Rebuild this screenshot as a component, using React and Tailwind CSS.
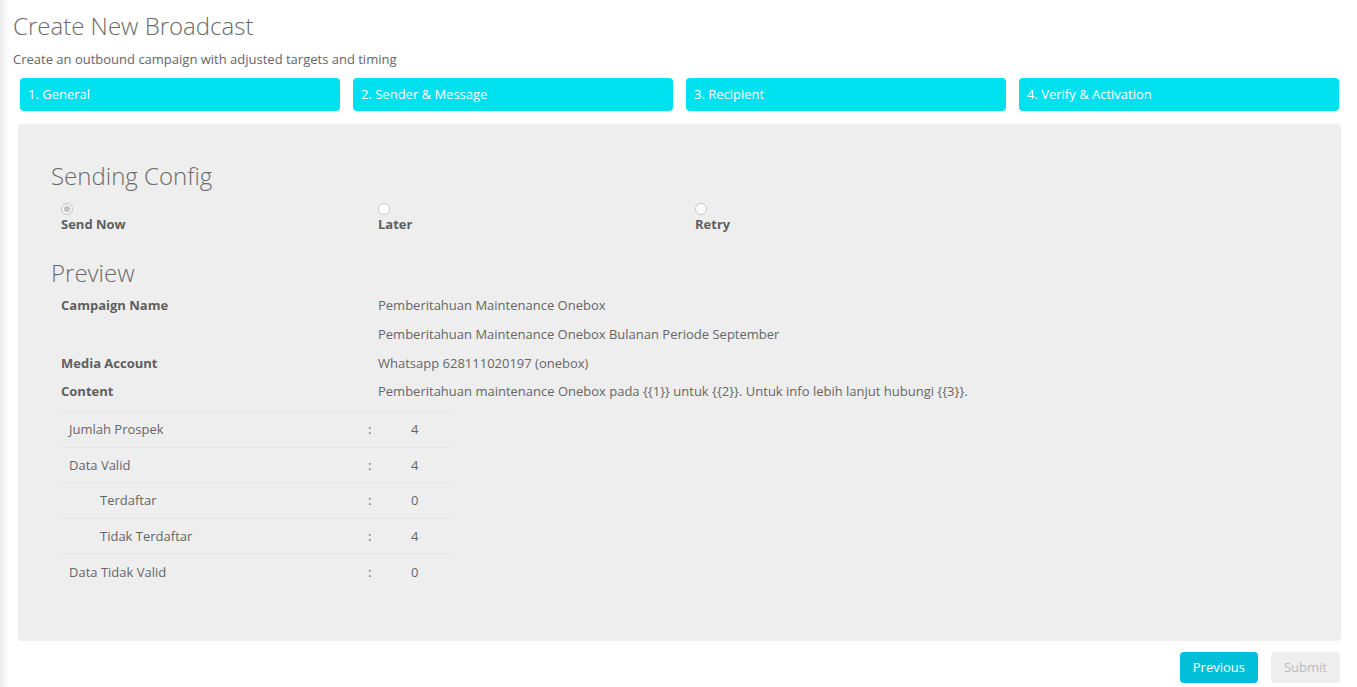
import React, { useState } from "react";

const steps = ["1. General", "2. Sender & Message", "3. Recipient", "4. Verify & Activation"];

const summary = [
  { label: "Jumlah Prospek", value: "4", indent: false },
  { label: "Data Valid", value: "4", indent: false },
  { label: "Terdaftar", value: "0", indent: true },
  { label: "Tidak Terdaftar", value: "4", indent: true },
  { label: "Data Tidak Valid", value: "0", indent: false },
];

function Radio({ checked }) {
  return (
    <span
      className={
        "block w-[12px] h-[12px] rounded-full border " +
        (checked ? "border-[#c4c4c4] bg-[#f4f4f4] flex items-center justify-center" : "border-[#c8c8c8] bg-white")
      }
    >
      {checked && <span className="block w-[6px] h-[6px] rounded-full bg-[#c2c2c2]" />}
    </span>
  );
}

export default function App() {
  const [mode, setMode] = useState("now");

  return (
    <div className="flex min-h-[687px] bg-white text-[#666]" style={{ fontFamily: '"Open Sans", sans-serif' }}>
      <div className="w-[10px] shrink-0 bg-gradient-to-r from-[#ededed] to-white" />
      <div className="flex-1 pr-[16px]">
        <h1 className="text-[24px] font-light leading-[32px] mt-[10px] ml-[3px] text-[#6b6b6b]">Create New Broadcast</h1>
        <p className="text-[13px] leading-[18px] mt-[8px] ml-[3px]">Create an outbound campaign with adjusted targets and timing</p>

        <div className="grid grid-cols-4 gap-[13px] mt-[10px] ml-[10px] mr-[2px]">
          {steps.map((s) => (
            <div key={s} className="h-[33px] rounded-[4px] bg-[#00e1f0] text-white text-[13px] flex items-center px-[8px]">
              {s}
            </div>
          ))}
        </div>

        <div className="mt-[13px] ml-[8px] h-[517px] rounded-[4px] bg-[#eeeeee] pl-[33px] pt-[36px]">
          <h2 className="text-[24px] font-light leading-[32px] text-[#6b6b6b]">Sending Config</h2>
          <div className="flex mt-[11px] pl-[10px]">
            {[
              ["now", "Send Now"],
              ["later", "Later"],
              ["retry", "Retry"],
            ].map(([k, l]) => (
              <label key={k} className="w-[317px] flex flex-col cursor-pointer" onClick={() => setMode(k)}>
                <Radio checked={mode === k} />
                <span className="text-[13px] font-bold leading-[18px] text-[#5f5f5f]">{l}</span>
              </label>
            ))}
          </div>

          <h2 className="text-[24px] font-light leading-[32px] mt-[24px] text-[#6b6b6b]">Preview</h2>
          <div className="pl-[10px] text-[13px] leading-[18px] mt-[6px]">
            <div className="flex h-[29px] items-start pt-[1px]">
              <span className="w-[317px] font-bold text-[#5f5f5f]">Campaign Name</span>
              <span>Pemberitahuan Maintenance Onebox</span>
            </div>
            <div className="flex h-[29px] items-start pt-[1px]">
              <span className="w-[317px]" />
              <span>Pemberitahuan Maintenance Onebox Bulanan Periode September</span>
            </div>
            <div className="flex h-[28px] items-start pt-[1px]">
              <span className="w-[317px] font-bold text-[#5f5f5f]">Media Account</span>
              <span>Whatsapp 628111020197 (onebox)</span>
            </div>
            <div className="flex h-[28px] items-start pt-[1px]">
              <span className="w-[317px] font-bold text-[#5f5f5f]">Content</span>
              <span>Pemberitahuan maintenance Onebox pada {"{{1}}"} untuk {"{{2}}"}. Untuk info lebih lanjut hubungi {"{{3}}"}.</span>
            </div>

            <div className="w-[390px] mt-[2px] border-t border-[#e6e6e6]">
              {summary.map((r, i) => (
                <div
                  key={r.label}
                  className={"flex items-center h-[35.5px] " + (i < summary.length - 1 ? "border-b border-[#e6e6e6]" : "")}
                >
                  <span className={"w-[307px] " + (r.indent ? "pl-[39px]" : "pl-[8px]")}>{r.label}</span>
                  <span className="w-[43px]">:</span>
                  <span>{r.value}</span>
                </div>
              ))}
            </div>
          </div>
        </div>

        <div className="flex justify-end gap-[13px] mt-[11px] mr-[1px]">
          <button className="h-[31px] px-[13px] rounded-[4px] bg-[#00bfd8] text-white text-[13px]">Previous</button>
          <button className="h-[31px] px-[13px] rounded-[4px] bg-[#eeeeee] text-[#bdbdbd] text-[13px]" disabled>
            Submit
          </button>
        </div>
      </div>
    </div>
  );
}
